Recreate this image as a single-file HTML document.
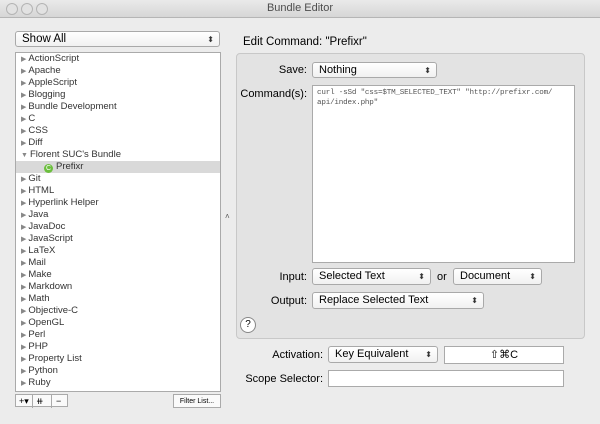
<html><head><style>
body{margin:0;width:600px;height:424px;background:#ececec;font-family:"Liberation Sans",sans-serif;font-size:11px;color:#000;position:relative;overflow:hidden}
.a{position:absolute;white-space:nowrap}
.tb{left:0;top:0;width:600px;height:17px;background:linear-gradient(#eaeaea,#d6d6d6);border-bottom:1px solid #b5b5b5;text-align:center;font-size:11px;line-height:17px;color:#4d4d4d}
.dot{width:10px;height:10px;border-radius:50%;border:1px solid #b4b4b4;background:#e2e2e2;top:3px}
.pop{background:linear-gradient(#fff,#f1f1f1);border:1px solid #a9a9a9;border-radius:3px;box-sizing:border-box;padding-left:6px;line-height:15px;font-size:11px}
.pop:after{content:"⬍";position:absolute;right:5px;top:0;font-size:8px;color:#333}
.list{left:15px;top:52px;width:206px;height:340px;background:#fff;border:1px solid #aaa;box-sizing:border-box}
.row{position:absolute;left:5px;height:12px;line-height:12px;font-size:9.5px;color:#333;white-space:nowrap}
.row b{font-weight:normal;font-size:7px;color:#888;margin-right:2px}
.lbl{text-align:right;font-size:11px}
.fld{background:#fff;border:1px solid #aaa;box-sizing:border-box}
</style></head><body>
<div class="a tb">Bundle Editor</div>
<div class="a dot" style="left:6px"></div><div class="a dot" style="left:21px"></div><div class="a dot" style="left:36px"></div>
<div class="a pop" style="left:15px;top:31px;width:205px;height:16px;font-size:11.5px">Show All</div>
<div class="a list">
<div class="a" style="left:0;top:108px;width:204px;height:12px;background:#d9d9d9"></div>
<div id="rows"></div>
</div>
<div class="a" style="left:243px;top:36px;font-size:11.5px">Edit Command: "Prefixr"</div>
<div class="a" style="left:236px;top:53px;width:349px;height:286px;background:#e3e3e3;border:1px solid #c8c8c8;border-radius:4px;box-sizing:border-box"></div>
<div class="a lbl" style="left:240px;top:64px;width:67px">Save:</div>
<div class="a pop" style="left:312px;top:62px;width:125px;height:16px">Nothing</div>
<div class="a lbl" style="left:240px;top:88px;width:67px">Command(s):</div>
<div class="a fld" style="left:312px;top:85px;width:263px;height:178px;font-family:'Liberation Mono',monospace;font-size:7.6px;letter-spacing:-0.2px;color:#555;padding:2px 4px;line-height:10px">curl -sSd "css=$TM_SELECTED_TEXT" "http://prefixr.com/<br>api/index.php"</div>
<div class="a lbl" style="left:240px;top:271px;width:67px">Input:</div>
<div class="a pop" style="left:312px;top:268px;width:119px;height:17px">Selected Text</div>
<div class="a" style="left:437px;top:271px">or</div>
<div class="a pop" style="left:453px;top:268px;width:89px;height:17px">Document</div>
<div class="a lbl" style="left:240px;top:295px;width:67px">Output:</div>
<div class="a pop" style="left:312px;top:292px;width:172px;height:17px">Replace Selected Text</div>
<div class="a" style="left:240px;top:317px;width:14px;height:14px;border:1px solid #888;border-radius:50%;background:#fff;text-align:center;line-height:14px;font-size:10px">?</div>
<div class="a lbl" style="left:240px;top:349px;width:83px">Activation:</div>
<div class="a pop" style="left:328px;top:346px;width:110px;height:17px">Key Equivalent</div>
<div class="a fld" style="left:444px;top:346px;width:120px;height:18px;text-align:center;line-height:16px">⇧⌘C</div>
<div class="a lbl" style="left:240px;top:373px;width:83px">Scope Selector:</div>
<div class="a fld" style="left:328px;top:370px;width:236px;height:17px"></div>
<div class="a" style="left:225px;top:212px;font-size:8px;color:#555">˄</div>
<div class="a" style="left:15px;top:394px;width:53px;height:13px;border:1px solid #aaa;background:#fafafa;font-size:9px;line-height:13px;box-sizing:border-box"><span style="margin-left:3px">+▾</span><span style="position:absolute;left:16px;border-left:1px solid #aaa;padding:0 3px">⧺</span><span style="position:absolute;left:35px;border-left:1px solid #aaa;padding:0 4px">−</span></div>
<div class="a" style="left:173px;top:394px;width:48px;height:14px;border:1px solid #aaa;background:#fafafa;font-size:7px;line-height:13px;text-align:center;box-sizing:border-box">Filter List...</div>
<script>
var n=["ActionScript","Apache","AppleScript","Blogging","Bundle Development","C","CSS","Diff","Florent SUC's Bundle","Prefixr","Git","HTML","Hyperlink Helper","Java","JavaDoc","JavaScript","LaTeX","Mail","Make","Markdown","Math","Objective-C","OpenGL","Perl","PHP","Property List","Python","Ruby"],h="";
n.forEach(function(t,i){var y=i*12;
if(i==9)h+='<div class="row" style="top:'+y+'px;left:28px"><span style="display:inline-block;width:9px;height:9px;border-radius:50%;background:#6cbf3e;color:#fff;font-size:7px;line-height:9px;text-align:center;vertical-align:-1px;margin-right:3px">C</span>'+t+'</div>';
else h+='<div class="row" style="top:'+y+'px"><b>'+(i==8?'▼':'▶')+'</b>'+t+'</div>';});
document.getElementById('rows').innerHTML=h;
</script>
</body></html>
